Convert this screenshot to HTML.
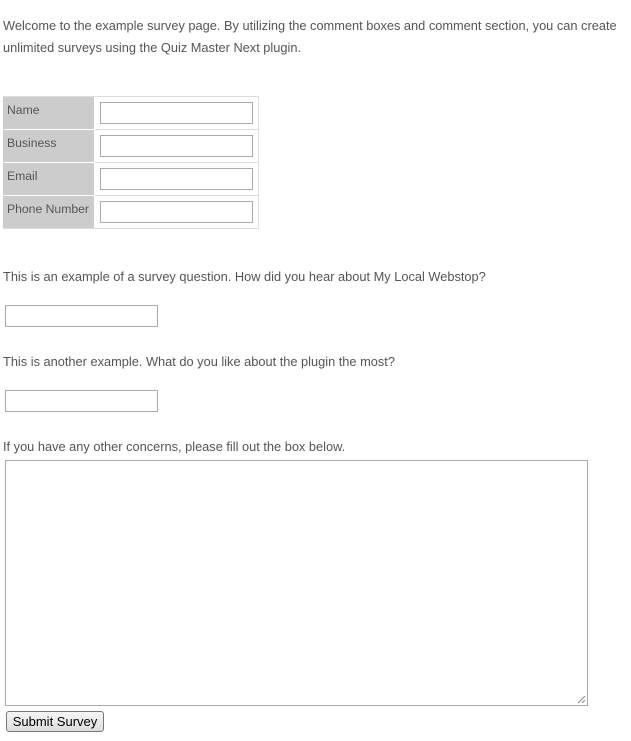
<!DOCTYPE html>
<html><head><meta charset="utf-8"><style>
body{margin:0;background:#fff;font-family:"Liberation Sans",sans-serif;font-size:12.8px;color:#555;width:631px;height:741px;position:relative;overflow:hidden}
.t{position:absolute;left:3px;white-space:nowrap}
.in{position:absolute;box-sizing:border-box;border:1px solid #aaa;background:#fff}
.lab{position:absolute;left:3px;width:91px;background:#ccc;box-sizing:border-box;padding-left:4px;color:#555;font-size:12.2px;white-space:nowrap}
</style></head><body>
<div class="t" style="top:18px">Welcome to the example survey page. By utilizing the comment boxes and comment section, you can create</div>
<div class="t" style="top:40px">unlimited surveys using the Quiz Master Next plugin.</div>

<div style="position:absolute;left:3px;top:96px;width:256px;height:133px;border:1px solid #ddd;box-sizing:border-box"></div>
<div class="lab" style="top:97px;height:32px;line-height:27px">Name</div>
<div class="lab" style="top:130px;height:32px;line-height:27px">Business</div>
<div class="lab" style="top:163px;height:32px;line-height:27px">Email</div>
<div class="lab" style="top:196px;height:32px;line-height:27px">Phone Number</div>
<div style="position:absolute;left:95px;top:129px;width:163px;height:1px;background:#ddd"></div>
<div style="position:absolute;left:95px;top:162px;width:163px;height:1px;background:#ddd"></div>
<div style="position:absolute;left:95px;top:195px;width:163px;height:1px;background:#ddd"></div>
<div class="in" style="left:100px;top:102px;width:153px;height:22px"></div>
<div class="in" style="left:100px;top:135px;width:153px;height:22px"></div>
<div class="in" style="left:100px;top:168px;width:153px;height:22px"></div>
<div class="in" style="left:100px;top:201px;width:153px;height:22px"></div>

<div class="t" style="top:269px">This is an example of a survey question. How did you hear about My Local Webstop?</div>
<div class="in" style="left:5px;top:305px;width:153px;height:22px"></div>
<div class="t" style="top:354px">This is another example. What do you like about the plugin the most?</div>
<div class="in" style="left:5px;top:390px;width:153px;height:22px"></div>
<div class="t" style="top:439px">If you have any other concerns, please fill out the box below.</div>
<div class="in" style="left:5px;top:460px;width:583px;height:246px"></div>
<svg style="position:absolute;left:577px;top:695px" width="9" height="9"><path d="M1 8L8 1M5 8L8 5" stroke="#888" stroke-width="1"/></svg>
<div style="position:absolute;left:6px;top:711px;width:98px;height:21px;box-sizing:border-box;border:1px solid #777;border-radius:3px;background:linear-gradient(#f6f6f6,#ddd);color:#000;font-size:13px;text-align:center;line-height:19px">Submit Survey</div>
</body></html>
